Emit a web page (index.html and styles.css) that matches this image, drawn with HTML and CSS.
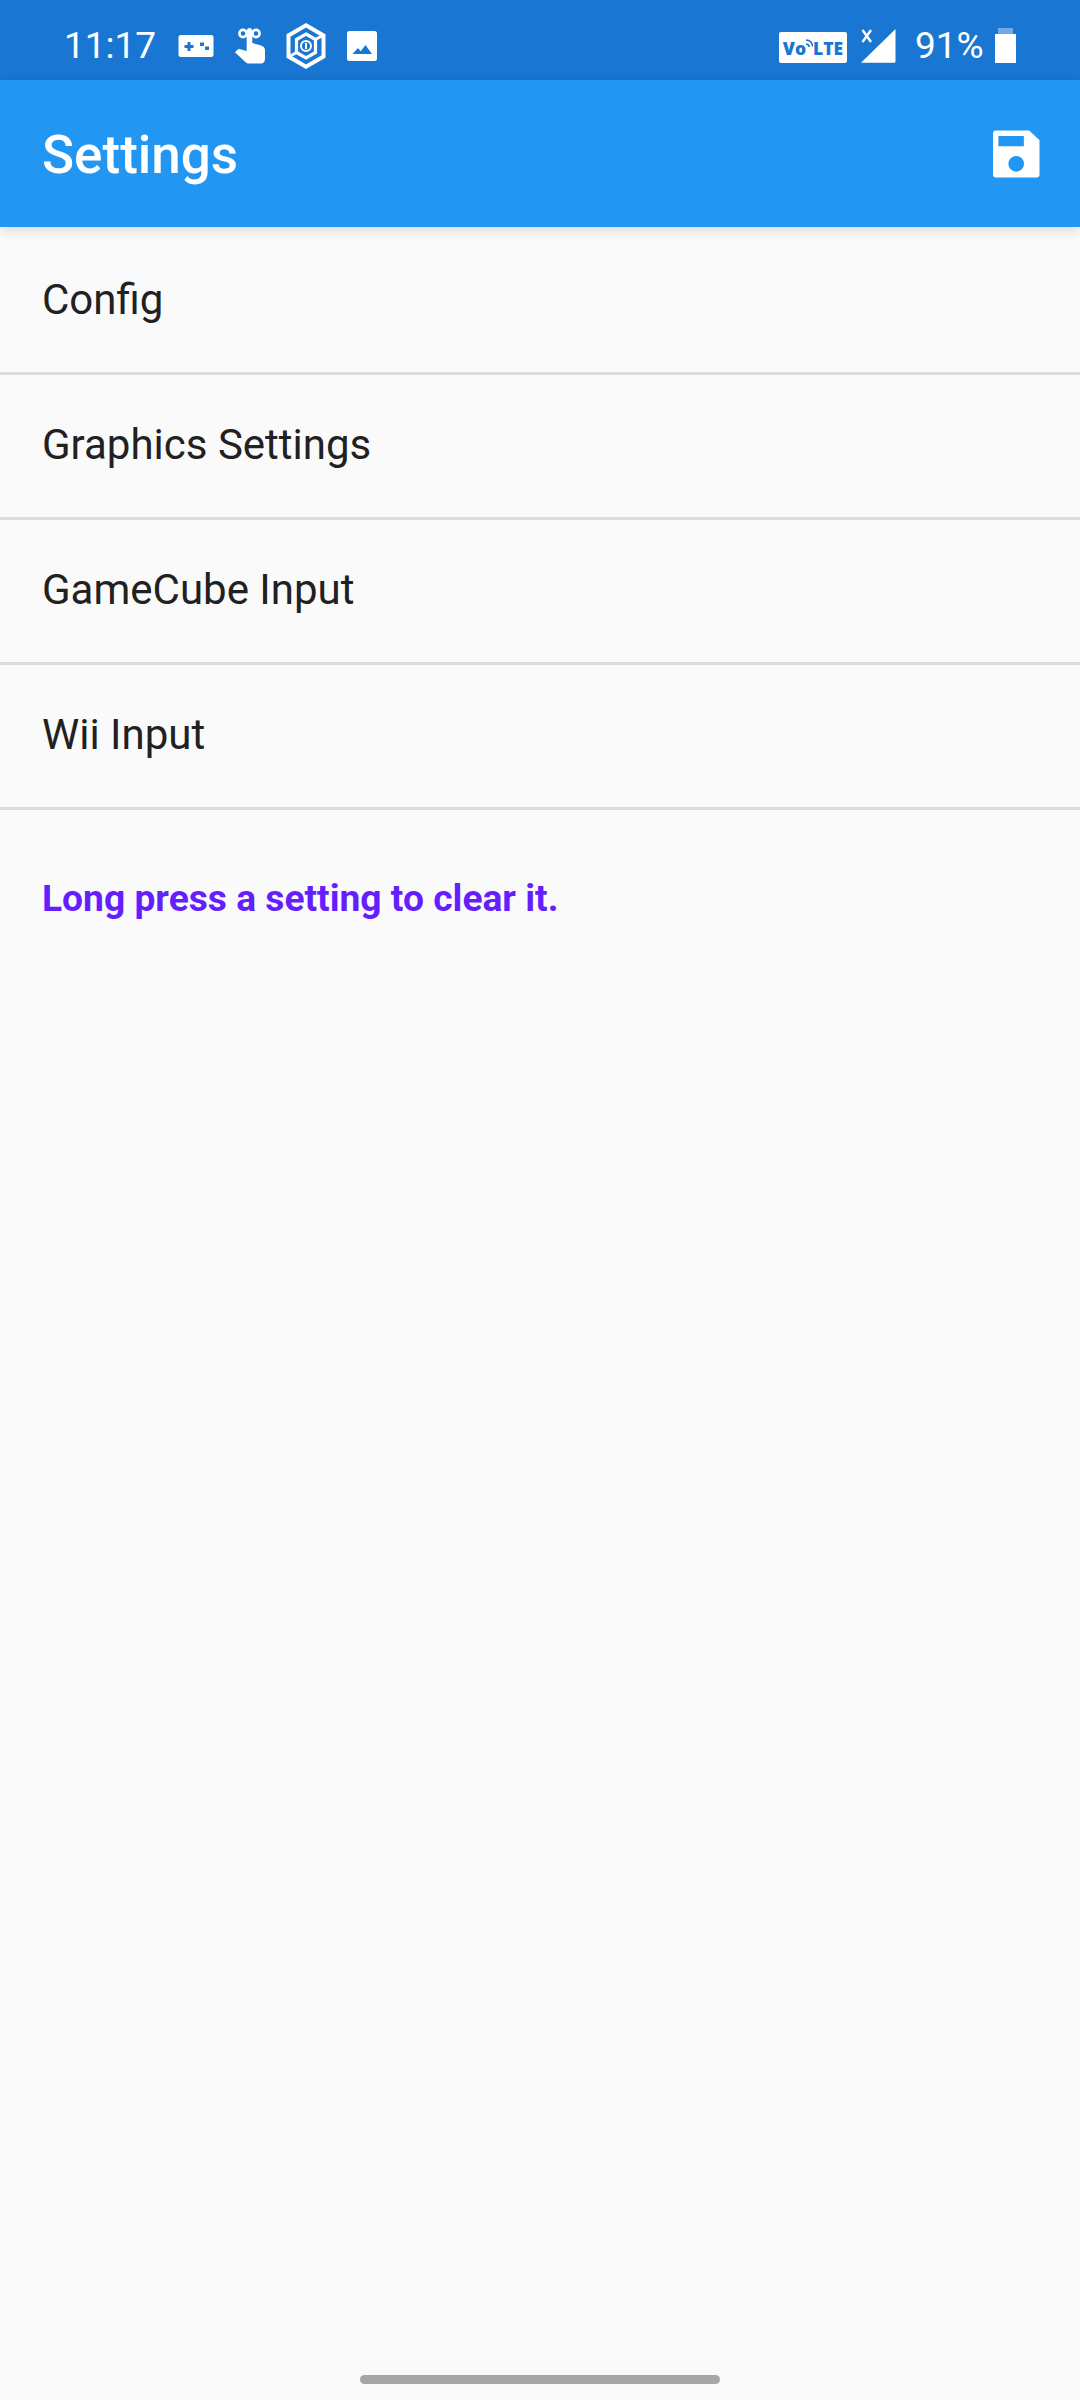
FILE: index.html
```html
<!DOCTYPE html>
<html>

<head>
<link rel="stylesheet" href="styles.css">
</head>

<body>
<div class="status">
<span class="clock">11:17</span>

<svg class="ic-pad" viewBox="0 0 36 24">
<path fill="#fff" fill-rule="evenodd" d="M3 1h30a2.500 2.500 0 0 1 2.500 2.500v17a2.500 2.500 0 0 1-2.500 2.500H3a2.500 2.500 0 0 1-2.500-2.500v-17A2.500 2.500 0 0 1 3 1zM9.500 8v3h-3v3h3v3h3v-3h3v-3h-3V8zM22 8.500h4v3.500h-4zM27 12.500h4v3.500h-4z"/>
</svg>

<svg class="ic-touch" viewBox="0 0 32 36">
<g fill="none" stroke="#fff" stroke-width="2.600">
<circle cx="9" cy="5.500" r="3.600"/>
<circle cx="22" cy="5.500" r="3.600"/>
</g>
<path fill="#fff" d="M15.500 0c1.500 0 2.800 1.300 2.800 2.800V15l8 2.300c2.600.8 4.700 2 4.700 4.900V31c0 2.500-1.600 4.500-4 4.500H14.700c-1.300 0-2.500-.6-3.400-1.500L1 24.300l2.200-2.300c.8-.8 2-1.100 3-.8l6.500 1.800V2.800C12.700 1.300 14 0 15.500 0z"/>
</svg>

<svg class="ic-hex" viewBox="0 0 40 46">
<g fill="none" stroke="#fff">
<path stroke-width="4" d="M20 2.300 37.500 12.500v21L20 43.700 2.500 33.500v-21z"/>
<path stroke-width="3.200" d="M20 11 29.500 16.500v13L20 35l-9.500-5.500v-13z"/>
<path stroke-width="3" d="M29.500 16.500l7-4M10.500 29.500l-7 4"/>
</g>
<circle cx="20" cy="23" r="5" fill="none" stroke="#fff" stroke-width="2"/>
<path fill="#fff" d="M19 20h2v6h-2z"/>
</svg>

<svg class="ic-image" viewBox="0 0 30 30">
<path fill="#fff" fill-rule="evenodd" d="M2.500 0h25A2.500 2.500 0 0 1 30 2.500v25a2.500 2.500 0 0 1-2.500 2.500h-25A2.500 2.500 0 0 1 0 27.500v-25A2.500 2.500 0 0 1 2.500 0zM5.500 23h19.500l-6.500-9-4.800 6.200-2.700-3.200z"/>
</svg>

<div class="status-right">
<span class="volte">Vo<svg class="ic-wave" viewBox="0 0 8 14">
<path fill="none" stroke="#1976d2" stroke-width="1.800" d="M0 7c2 0 3.500 1.500 3.500 3.500M0 2.500c4.500 0 7.500 3 7.500 7.500"/>
</svg>LTE</span>

<svg class="ic-signal" viewBox="0 0 35 34">
<path fill="#fff" d="M34.500 0v32.500a1.200 1.200 0 0 1-1.200 1.200H0z"/>
<path fill="none" stroke="#fff" stroke-width="2.400" d="M1.500 1l8.500 12M10 1 1.500 13"/>
</svg>

<span class="battery-text">91%</span>

<div class="battery">
<div class="battery-cap"></div>
<div class="battery-body"></div>
</div>
</div>
</div>

<div class="appbar">
<h1>Settings</h1>
<svg class="ic-save" viewBox="0 0 48 48">
<path fill="#fff" fill-rule="evenodd" d="M3 0h34l10.500 10v35a3 3 0 0 1-3 3H3a3 3 0 0 1-3-3V3a3 3 0 0 1 3-3zM5.500 5.500v10.500h26V5.500zM23.700 26a8 8 0 1 0 0 16 8 8 0 0 0 0-16z"/>
</svg>
</div>

<div class="list">
<div class="row">Config</div>
<div class="row">Graphics Settings</div>
<div class="row">GameCube Input</div>
<div class="row">Wii Input</div>
</div>

<div class="hint">Long press a setting to clear it.</div>

<div class="navbar">
<div class="homebar"></div>
</div>

</body>
</html>
```

FILE: styles.css
```css
html, body {
    margin: 0;
    height: 100%;
}

body {
    width: 1080px;
    height: 2400px;
    display: flex;
    flex-direction: column;
    overflow: hidden;
    background: #fafafa;
    font-family: Roboto, sans-serif;
}

.status {
    height: 69px;
    display: flex;
    align-items: center;
    padding-top: 11px;
    padding-left: 64px;
    padding-right: 64px;
    background: #1976d2;
    color: #fff;
}

.clock {
    width: 114px;
    font-size: 37px;
}

.ic-pad {
    width: 36px;
    height: 24px;
    margin-right: 20px;
}

.ic-touch {
    width: 32px;
    height: 36px;
    margin-right: 20px;
}

.ic-hex {
    width: 40px;
    height: 46px;
    margin-right: 21px;
}

.ic-image {
    width: 30px;
    height: 30px;
}

.status-right {
    margin-left: auto;
    display: flex;
    align-items: center;
}

.volte {
    width: 68px;
    height: 31px;
    margin-right: 14px;
    margin-top: 4px;
    display: flex;
    align-items: center;
    justify-content: center;
    border-radius: 2px;
    background: #fff;
    color: #1976d2;
    font-family: "Open Sans", sans-serif;
    font-size: 17.500px;
    font-weight: 800;
}

.ic-wave {
    width: 7px;
    height: 12px;
    margin-top: -8px;
    margin-right: 0;
}

.ic-signal {
    width: 35px;
    height: 34px;
    margin-right: 19px;
}

.battery-text {
    width: 80px;
    font-size: 37px;
}

.battery {
    width: 21px;
}

.battery-cap {
    width: 15px;
    height: 6px;
    margin: 0 auto;
    background: #75a9e2;
}

.battery-body {
    height: 29px;
    background: #fff;
}

.appbar {
    height: 147px;
    display: flex;
    align-items: center;
    justify-content: space-between;
    padding-left: 42px;
    padding-right: 40px;
    background: #2196f3;
    box-shadow: 0 3px 12px rgba(0, 0, 0, 0.14);
    position: relative;
}

h1 {
    margin: 3px 0 0;
    font-size: 53px;
    font-weight: 500;
    color: #fff;
}

.ic-save {
    width: 47px;
    height: 48px;
}

.list {
    padding-top: 3px;
}

.row {
    height: 139px;
    display: flex;
    align-items: center;
    padding-left: 42px;
    padding-bottom: 3px;
    border-bottom: 3px solid #dcdcdc;
    font-size: 42px;
    color: #212121;
}

.hint {
    margin-top: 66px;
    padding-left: 42px;
    font-size: 37.200px;
    font-weight: 700;
    color: #651fff;
}

.navbar {
    margin-top: auto;
    padding-bottom: 16px;
    display: flex;
    justify-content: center;
}

.homebar {
    width: 360px;
    height: 9px;
    border-radius: 5px;
    background: #a6a6a6;
}
```
